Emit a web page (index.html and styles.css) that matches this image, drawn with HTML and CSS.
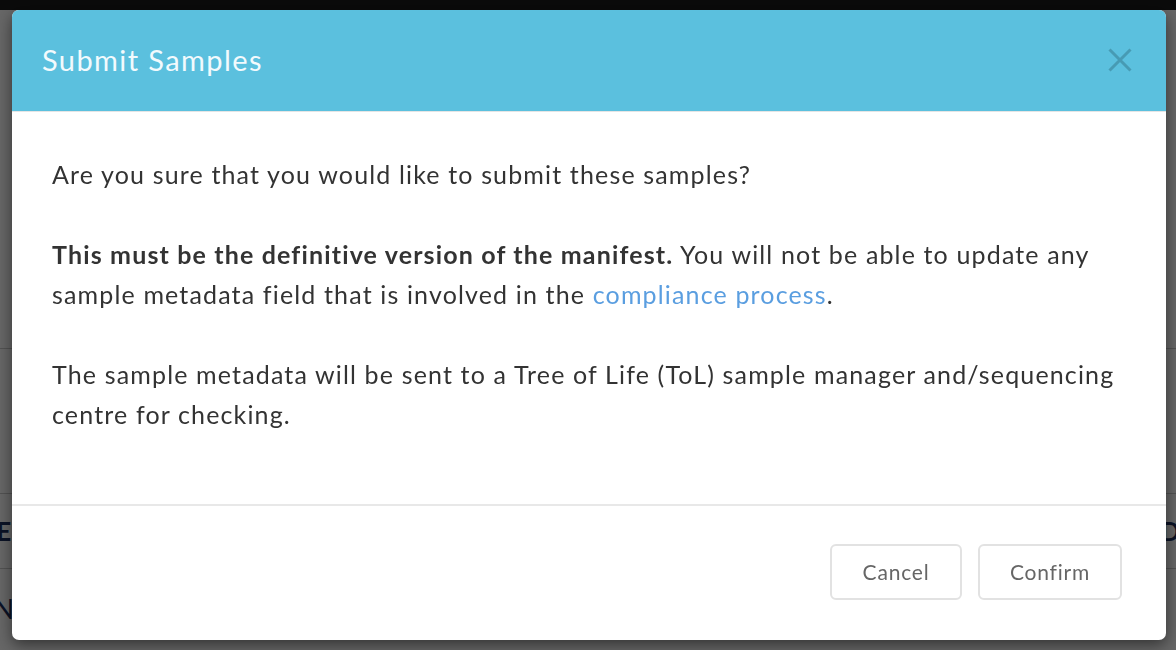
FILE: index.html
```html
<!DOCTYPE html>
<html>
<head>
<meta charset="utf-8">
<link rel="stylesheet" href="styles.css">
</head>
<body>
<div class="page">
  <div class="navbar"></div>
  <div class="table">
    <div class="row row-a"></div>
    <div class="row row-b"><span class="cell-l">SE</span><span class="cell-r">D</span></div>
    <div class="row row-c"><span class="cell-l cell-n">N</span><span class="cell-r"></span></div>
  </div>
</div>
<div class="backdrop"></div>
<div class="modal">
  <div class="modal-header">
    <h4 class="modal-title">Submit Samples</h4>
    <button class="close" aria-label="Close">
      <svg width="24" height="24" viewBox="0 0 24 24"><path d="M1.5 1.5 L22.5 22.5 M22.5 1.5 L1.5 22.5" stroke="currentColor" stroke-width="3" fill="none"/></svg>
    </button>
  </div>
  <div class="modal-body">
    <p>Are you sure that you would like to submit these samples?</p>
    <p><strong>This must be the definitive version of the manifest.</strong> You will not be able to update any sample metadata field that is involved in the <a href="#">compliance process</a>.</p>
    <p>The sample metadata will be sent to a Tree of Life (ToL) sample manager and/sequencing centre for checking.</p>
  </div>
  <div class="modal-footer">
    <button class="btn">Cancel</button>
    <button class="btn">Confirm</button>
  </div>
</div>
</body>
</html>
```
FILE: styles.css
```css
html, body {
  margin: 0;
  padding: 0;
  width: 1176px;
  height: 650px;
  overflow: hidden;
  font-family: Lato, "Open Sans", sans-serif;
}
.page {
  background: #fff;
  height: 650px;
}
.navbar {
  height: 10px;
  background: #1a1a1a;
}
.table {
  padding-top: 338px;
}
.row {
  border-top: 1px solid #ccc;
  display: flex;
  justify-content: space-between;
  align-items: center;
  font-size: 26px;
  color: #1c2f5e;
  font-weight: bold;
}
.row-a { height: 144px; }
.row-b { height: 74px; }
.row-c { height: 80px; font-weight: normal; }
.cell-l { margin-left: -18px; }
.cell-n { margin-left: -6px; }
.cell-r { margin-right: -4px; }
.backdrop {
  position: fixed;
  inset: 0;
  background: rgba(0, 0, 0, 0.6);
}
.modal {
  position: fixed;
  left: 12px;
  top: 10px;
  width: 1154px;
  height: 630px;
  background: #fff;
  border-radius: 7px;
  box-shadow: 0 5px 15px rgba(0, 0, 0, 0.5);
  display: flex;
  flex-direction: column;
  overflow: hidden;
}
.modal-header {
  flex-shrink: 0;
  background: #5bc0de;
  height: 102px;
  border-bottom: 1px solid #e5e5e5;
  box-sizing: border-box;
  display: flex;
  align-items: center;
  justify-content: space-between;
  padding: 0 34px 0 30px;
}
.modal-title {
  margin: 0;
  font-size: 29px;
  letter-spacing: 1.4px;
  font-weight: normal;
  color: #f2fafd;
  padding-bottom: 2px;
}
.close {
  background: none;
  border: 0;
  padding: 0;
  color: #479bb4;
  display: flex;
  margin-top: -2px;
}
.modal-body {
  padding: 42px 40px 28px;
  font-size: 25px;
  letter-spacing: 1.15px;
  line-height: 40px;
  color: #333;
  flex: 1;
}
.modal-body p {
  margin: 0 0 40px;
}
.modal-body strong {
  font-weight: bold;
}
.modal-body a {
  color: #5a9ee0;
  text-decoration: none;
}
.modal-footer {
  flex-shrink: 0;
  border-top: 2px solid #e8e8e8;
  display: flex;
  justify-content: flex-end;
  gap: 16px;
  padding: 38px 44px 40px;
}
.btn {
  font-family: Lato, "Open Sans", sans-serif;
  font-size: 21px;
  letter-spacing: 0.8px;
  color: #666;
  background: #fff;
  border: 2px solid #e2e2e2;
  border-radius: 6px;
  height: 56px;
  padding: 0 0 2px;
}
.btn:first-child {
  width: 132px;
}
.btn:last-child {
  width: 144px;
}
```
